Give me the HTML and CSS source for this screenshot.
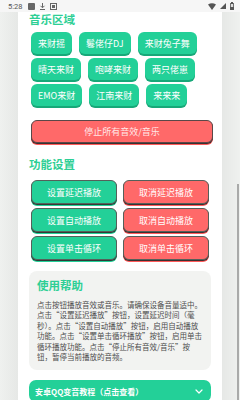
FILE: index.html
```html
<!DOCTYPE html>
<html>
<head>
    <meta charset="utf-8">
    <link rel="stylesheet" href="styles.css">
</head>
<body>
    <div class="status-bar">
        <span class="time">5:28</span>
        <svg class="st-icon" width="7" height="7" viewBox="0 0 7 7"><rect x="0" y="0" width="7" height="7" rx="1" fill="#666"/></svg>
        <svg class="st-icon" width="7" height="7" viewBox="0 0 7 7"><path d="M3.5 0v4.5M1.5 2.8l2 2 2-2M1 6.5h5" stroke="#666" stroke-width="1" fill="none"/></svg>
        <svg class="st-icon" width="7" height="7" viewBox="0 0 7 7"><rect x="0.5" y="0.5" width="6" height="6" fill="none" stroke="#666"/><rect x="2" y="2" width="3" height="3" fill="#666"/></svg>
        <span class="spacer"></span>
        <svg class="st-icon" width="8" height="7" viewBox="0 0 8 7"><path d="M0 1.5Q4 -1 8 1.5L4 7Z" fill="#555"/></svg>
        <svg class="st-icon" width="6" height="6" viewBox="0 0 6 6"><path d="M6 0V6H0Z" fill="#555"/></svg>
        <svg class="st-icon" width="4" height="8" viewBox="0 0 4 8"><rect x="0" y="1" width="4" height="7" rx="0.5" fill="#555"/><rect x="1" y="0" width="2" height="1" fill="#555"/><rect x="0.8" y="2" width="2.4" height="3" fill="#ddd"/></svg>
    </div>

    <div class="screen">
        <div class="edge edge-left"></div>

        <div class="card">
            <h2 class="section-title first">音乐区域</h2>
            <div class="sound-list">
                <button class="sound-btn">来财摇</button>
                <button class="sound-btn">鬈佬仔DJ</button>
                <button class="sound-btn">来财兔子舞</button>
                <button class="sound-btn">晴天来财</button>
                <button class="sound-btn">咆哮来财</button>
                <button class="sound-btn">两只佬崽</button>
                <button class="sound-btn">EMO来财</button>
                <button class="sound-btn">江南来财</button>
                <button class="sound-btn">来来来</button>
            </div>

            <button class="stop-btn">停止所有音效/音乐</button>

            <h2 class="section-title">功能设置</h2>
            <div class="func-grid">
                <button class="func-btn on">设置延迟播放</button>
                <button class="func-btn off">取消延迟播放</button>
                <button class="func-btn on">设置自动播放</button>
                <button class="func-btn off">取消自动播放</button>
                <button class="func-btn on">设置单击循环</button>
                <button class="func-btn off">取消单击循环</button>
            </div>

            <div class="help">
                <h3 class="help-title">使用帮助</h3>
                <p class="help-text">点击按钮播放音效或音乐。请确保设备音量适中。点击“设置延迟播放”按钮，设置延迟时间（毫秒）。点击“设置自动播放”按钮，启用自动播放功能。点击“设置单击循环播放”按钮，启用单击循环播放功能。点击“停止所有音效/音乐”按钮，暂停当前播放的音频。</p>
            </div>

            <div class="accordion">
                <span>安卓QQ变音教程（点击查看）</span>
                <svg width="8" height="5" viewBox="0 0 8 5"><path d="M1 1l3 3 3-3" stroke="#fff" stroke-width="1.2" fill="none" stroke-linecap="round" stroke-linejoin="round"/></svg>
            </div>
        </div>

        <div class="edge edge-right">
            <div class="scrollbar"></div>
        </div>
    </div>
</body>
</html>
```

FILE: styles.css
```css
body {
    margin: 0;
    padding: 0;
    width: 240px;
    height: 400px;
    overflow: hidden;
    background-color: #eef0ee;
    font-family: "Noto Sans CJK SC", "Noto Sans", sans-serif;
}

.status-bar {
    height: 12px;
    display: flex;
    align-items: center;
    gap: 4px;
    padding: 0 6px 0 8px;
    background-color: #f6f6f6;
    font-family: Roboto, sans-serif;
    font-size: 7.5px;
    color: #555;
}
.time {
    margin-right: 2px;
}
.spacer {
    flex: 1;
}

.screen {
    display: flex;
    height: 388px;
}

.edge {
    width: 18px;
}
.edge-left {
    background: linear-gradient(to right, #eff1ef, #e6e8e6);
}
.edge-right {
    background: linear-gradient(to right, #e6e8e6, #eff1ef);
    display: flex;
    justify-content: flex-end;
    padding-top: 172px;
    box-sizing: border-box;
}
.scrollbar {
    width: 2px;
    height: 216px;
    background-color: #a9aaa9;
    margin-right: 1px;
}

.card {
    width: 204px;
    background-color: white;
    padding: 0 11px;
    box-sizing: border-box;
    overflow: hidden;
}

.section-title {
    margin: 14px 0 0 0;
    font-size: 11.5px;
    line-height: 14px;
    font-weight: bold;
    color: #2ecf95;
}
.section-title.first {
    margin-top: 0;
}

.sound-list {
    display: flex;
    flex-wrap: wrap;
    gap: 4px 7px;
    padding-left: 2px;
    margin-top: 6px;
}
.sound-btn {
    height: 22px;
    padding: 0 7px;
    border: none;
    border-radius: 6px;
    background-color: #23d098;
    color: white;
    font-family: inherit;
    font-size: 9px;
    box-shadow: 0 2px 0 #17a878;
}

.stop-btn {
    display: block;
    width: 182px;
    height: 23px;
    margin: 14px 0 0 2px;
    border: 1px solid #5a4848;
    border-radius: 6px;
    background-color: #ff6969;
    color: #ffe8e8;
    font-family: inherit;
    font-size: 9px;
    box-shadow: 0 1px 0 #3a3030, 0 2px 0 #ff5a5a;
}

.func-grid {
    display: grid;
    grid-template-columns: 86px 86px;
    gap: 4px 6px;
    padding-left: 2px;
    margin-top: 9px;
}
.func-btn {
    height: 24px;
    border: 1px solid #55605a;
    border-radius: 6px;
    color: white;
    font-family: inherit;
    font-size: 9px;
}
.func-btn.on {
    background-color: #23d098;
    box-shadow: 0 1px 0 #2f3a35, 0 2px 0 #23d098;
}
.func-btn.off {
    background-color: #ff6969;
    box-shadow: 0 1px 0 #3a3030, 0 2px 0 #ff5a5a;
}

.help {
    margin-top: 11px;
    padding: 7px 8px 8px 8px;
    background-color: #f2f3f1;
    border-radius: 8px;
}
.help-title {
    margin: 0;
    font-size: 11.5px;
    line-height: 15px;
    font-weight: bold;
    color: #2ecf95;
}
.help-text {
    margin: 7px 0 0 0;
    font-size: 7.5px;
    line-height: 10.4px;
    color: #4d4d4d;
}

.accordion {
    margin-top: 10px;
    height: 22px;
    padding: 0 8px 0 6px;
    display: flex;
    align-items: center;
    justify-content: space-between;
    background-color: #23d098;
    border-radius: 7px;
    color: white;
    font-size: 8px;
    font-weight: bold;
}
```
